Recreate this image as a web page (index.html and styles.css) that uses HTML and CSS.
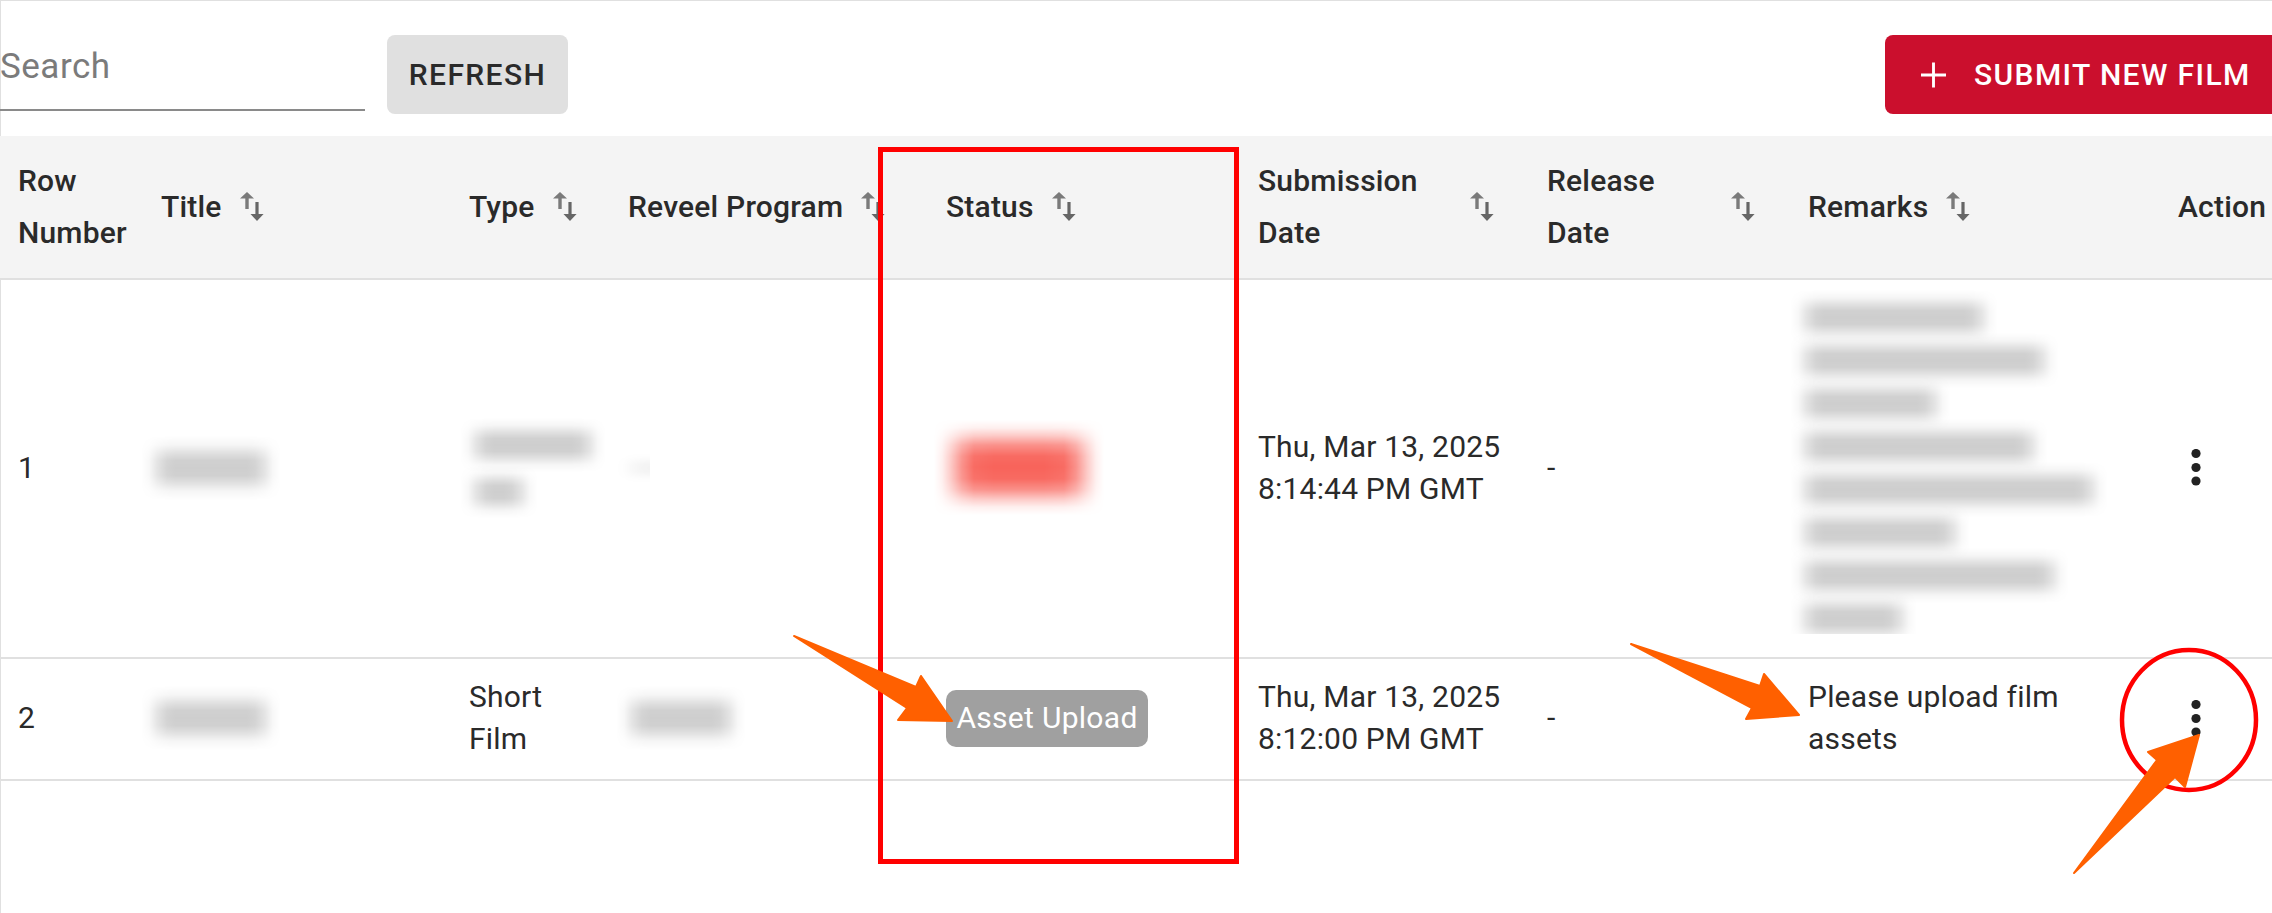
FILE: index.html
```html
<!DOCTYPE html>
<html>
<head>
    <meta charset="utf-8">
    <title>Film submissions</title>
    <link rel="stylesheet" href="styles.css">
</head>
<body>
    <div class="page">
        <div class="toolbar">
            <div class="search"><span class="search-text">Search</span></div>
            <button class="btn btn-refresh">REFRESH</button>
            <button class="btn btn-submit">
                <svg class="plus-icon" viewBox="0 0 26 26"><path d="M11.5 0h3v11.5H26v3H14.5V26h-3V14.5H0v-3h11.5z"/></svg>
                SUBMIT NEW FILM
            </button>
        </div>

        <table class="films">
            <colgroup>
                <col class="col-row">
                <col class="col-title">
                <col class="col-type">
                <col class="col-program">
                <col class="col-status">
                <col class="col-submitted">
                <col class="col-release">
                <col class="col-remarks">
                <col class="col-action">
            </colgroup>
            <thead>
                <tr>
                    <th>Row Number</th>
                    <th><div class="th-inner"><span>Title</span><svg class="sort-icon"><use href="#sort"/></svg></div></th>
                    <th><div class="th-inner"><span>Type</span><svg class="sort-icon"><use href="#sort"/></svg></div></th>
                    <th><div class="th-inner"><span>Reveel Program</span><svg class="sort-icon"><use href="#sort"/></svg></div></th>
                    <th><div class="th-inner"><span>Status</span><svg class="sort-icon"><use href="#sort"/></svg></div></th>
                    <th><div class="th-inner"><span class="th-grow">Submission<br>Date</span><svg class="sort-icon"><use href="#sort"/></svg></div></th>
                    <th><div class="th-inner"><span class="th-grow">Release<br>Date</span><svg class="sort-icon"><use href="#sort"/></svg></div></th>
                    <th><div class="th-inner"><span>Remarks</span><svg class="sort-icon"><use href="#sort"/></svg></div></th>
                    <th>Action</th>
                </tr>
            </thead>
            <tbody>
                <tr class="row-tall">
                    <td>1</td>
                    <td><div class="blur blur-title"></div></td>
                    <td>
                        <div class="blur blur-type-a"></div>
                        <div class="blur blur-type-b"></div>
                    </td>
                    <td><div class="blur blur-dash"></div></td>
                    <td><div class="blur blur-status"></div></td>
                    <td>Thu, Mar 13, 2025<br>8:14:44 PM GMT</td>
                    <td>-</td>
                    <td class="remarks-cell">
                        <div class="remarks-blur">
                            <div class="blur remark-line"></div>
                            <div class="blur remark-line"></div>
                            <div class="blur remark-line"></div>
                            <div class="blur remark-line"></div>
                            <div class="blur remark-line"></div>
                            <div class="blur remark-line"></div>
                            <div class="blur remark-line"></div>
                            <div class="blur remark-line"></div>
                        </div>
                    </td>
                    <td><svg class="kebab" viewBox="0 0 10 37"><circle cx="5" cy="4.5" r="4.6"/><circle cx="5" cy="18.5" r="4.6"/><circle cx="5" cy="32" r="4.6"/></svg></td>
                </tr>
                <tr class="row-short">
                    <td>2</td>
                    <td><div class="blur blur-title"></div></td>
                    <td>Short<br>Film</td>
                    <td><div class="blur blur-program"></div></td>
                    <td><span class="badge">Asset Upload</span></td>
                    <td>Thu, Mar 13, 2025<br>8:12:00 PM GMT</td>
                    <td>-</td>
                    <td>Please upload film<br>assets</td>
                    <td><svg class="kebab" viewBox="0 0 10 37"><circle cx="5" cy="4.5" r="4.6"/><circle cx="5" cy="18.5" r="4.6"/><circle cx="5" cy="32" r="4.6"/></svg></td>
                </tr>
            </tbody>
        </table>
    </div>

    <!-- sort icon, reused in the header cells -->
    <svg class="defs">
        <symbol id="sort" viewBox="0 0 41 30">
            <path d="M7 0l7 6.5H8.7V17H5.3V6.5H0z" fill="#7a7a7a"/>
            <path d="M15.4 10h3.2v12h5L17 29l-6.5-7h4.9z" fill="#666"/>
        </symbol>
    </svg>

    <!-- hand-drawn markup on top of the screenshot -->
    <svg class="annotations" viewBox="0 0 2272 913">
        <rect class="mark-line" x="880.5" y="149.5" width="356" height="712" stroke-width="5"/>
        <ellipse class="mark-line" cx="2189" cy="720" rx="67" ry="70" stroke-width="4.5"/>
        <polygon class="mark-arrow" points="794,636 916,687 921,676 952,721 898,720 907,708"/>
        <polygon class="mark-arrow" points="1631,644 1760,686 1764,674 1799,715 1746,719 1752,708"/>
        <polygon class="mark-arrow" points="2074,873 2157,760 2148,752 2199,735 2185,787 2175,777"/>
    </svg>
</body>
</html>
```

FILE: styles.css
```css
:root {
    --text: #2a2a2a;
    --border: #e0e0e0;
    --head-bg: #f4f4f4;
    --red: #cb0f2d;
    --mark-red: #ff0000;
    --mark-orange: #ff6000;
    --fade-x: linear-gradient(to right, transparent, rgba(0,0,0,.15) 8px, rgba(0,0,0,.55) 16px, rgba(0,0,0,.9) 26px, #000 34px, #000 calc(100% - 34px), rgba(0,0,0,.9) calc(100% - 26px), rgba(0,0,0,.55) calc(100% - 16px), rgba(0,0,0,.15) calc(100% - 8px), transparent);
    --fade-y: linear-gradient(to bottom, transparent, rgba(0,0,0,.2) 14%, rgba(0,0,0,.6) 26%, rgba(0,0,0,.95) 38%, #000 50%, rgba(0,0,0,.95) 62%, rgba(0,0,0,.6) 74%, rgba(0,0,0,.2) 86%, transparent);
    --soft-x: linear-gradient(to right, transparent, rgba(0,0,0,.1) 8px, rgba(0,0,0,.35) 17px, rgba(0,0,0,.7) 28px, rgba(0,0,0,.95) 40px, #000 60px, #000 calc(100% - 60px), rgba(0,0,0,.95) calc(100% - 40px), rgba(0,0,0,.7) calc(100% - 28px), rgba(0,0,0,.35) calc(100% - 17px), rgba(0,0,0,.1) calc(100% - 8px), transparent);
    --soft-y: linear-gradient(to bottom, transparent, rgba(0,0,0,.1) 8px, rgba(0,0,0,.35) 16px, rgba(0,0,0,.7) 25px, rgba(0,0,0,.95) 36px, #000 47px, rgba(0,0,0,.95) calc(100% - 36px), rgba(0,0,0,.7) calc(100% - 25px), rgba(0,0,0,.35) calc(100% - 16px), rgba(0,0,0,.1) calc(100% - 8px), transparent);
}

body {
    margin: 0;
    background: #fff;
    font-family: Roboto, "Liberation Sans", sans-serif;
    color: var(--text);
    overflow: hidden;
}

.page {
    height: 913px;
    box-sizing: border-box;
    border-top: 1px solid var(--border);
    border-left: 1px solid var(--border);
}

.toolbar {
    display: flex;
    align-items: flex-start;
    height: 135px;
    padding-top: 34px;
    box-sizing: border-box;
}

.search {
    width: 365px;
    height: 76px;
    box-sizing: border-box;
    border-bottom: 2px solid #8a8a8a;
    margin-right: 22px;
    margin-left: -1px;
}

.search-text {
    display: block;
    margin-top: 12px;
    font-size: 35px;
    line-height: 40px;
    letter-spacing: 0.5px;
    color: #7b7b7b;
}

.btn {
    display: flex;
    align-items: center;
    height: 79px;
    border: none;
    border-radius: 8px;
    font-family: inherit;
    font-size: 30px;
    font-weight: 500;
    letter-spacing: 1.4px;
    padding: 0;
}

.btn-refresh {
    width: 181px;
    justify-content: center;
    background: var(--border);
    color: var(--text);
}

.btn-submit {
    margin-left: auto;
    width: 387px;
    padding-left: 36px;
    box-sizing: border-box;
    border-radius: 8px 0 0 8px;
    background: var(--red);
    color: #fff;
}

.plus-icon {
    width: 25px;
    height: 26px;
    margin-right: 28px;
    fill: #fff;
}

.films {
    width: 2273px;
    margin-left: -1px;
    table-layout: fixed;
    border-collapse: separate;
    border-spacing: 0;
    font-size: 30px;
    letter-spacing: 0.2px;
    line-height: 42px;
}

.col-row { width: 143px; }
.col-title { width: 308px; }
.col-type { width: 159px; }
.col-program { width: 318px; }
.col-status { width: 312px; }
.col-submitted { width: 289px; }
.col-release { width: 261px; }
.col-remarks { width: 370px; }
.col-action { width: 113px; }

.films th {
    height: 144px;
    box-sizing: border-box;
    background: var(--head-bg);
    border-bottom: 2px solid var(--border);
    padding: 0 18px;
    text-align: left;
    font-weight: 500;
    line-height: 52px;
}

.th-inner {
    display: flex;
    align-items: center;
    white-space: nowrap;
}

.th-grow {
    flex: 1;
}

.sort-icon {
    flex: none;
    width: 41px;
    height: 30px;
    margin-left: 18px;
}

.defs {
    display: none;
}

.films td {
    box-sizing: border-box;
    border-bottom: 2px solid var(--border);
    padding: 0 18px 2px;
    vertical-align: middle;
}

.row-tall td { height: 379px; }
.row-short td { height: 122px; }

/* redacted text: soft smears, faded out on both axes */
.blur {
    background: #cecece;
    -webkit-mask-image: var(--fade-x), var(--fade-y);
    -webkit-mask-composite: source-in;
    mask-image: var(--fade-x), var(--fade-y);
    mask-composite: intersect;
}

.blur-title {
    width: 140px;
    height: 64px;
    margin-left: -20px;
}

.blur-type-a {
    width: 146px;
    height: 54px;
    margin: 0 0 -6px -9px;
}

.blur-type-b {
    width: 78px;
    height: 52px;
    margin-left: -9px;
}

.blur-dash {
    width: 34px;
    height: 30px;
    margin-left: -12px;
    background: #f3f3f3;
}

.blur-program {
    width: 130px;
    height: 64px;
    margin-left: -12px;
}

.blur-status {
    width: 170px;
    height: 95px;
    margin-left: -12px;
    background: #f8635a;
    -webkit-mask-image: var(--soft-x), var(--soft-y);
    mask-image: var(--soft-x), var(--soft-y);
}

.films td.remarks-cell {
    padding: 0;
}

.remarks-blur {
    height: 344px;
    margin-top: -13px;
    box-sizing: border-box;
    overflow: hidden;
}

.remark-line {
    height: 55px;
    margin-bottom: -12px;
}

.remark-line:nth-child(1) { width: 208px; }
.remark-line:nth-child(2) { width: 269px; }
.remark-line:nth-child(3) { width: 161px; }
.remark-line:nth-child(4) { width: 258px; }
.remark-line:nth-child(5) { width: 318px; }
.remark-line:nth-child(6) { width: 180px; }
.remark-line:nth-child(7) { width: 279px; }
.remark-line:nth-child(8) { width: 127px; }

.badge {
    display: inline-flex;
    align-items: center;
    justify-content: center;
    width: 202px;
    height: 57px;
    border-radius: 10px;
    background: #a0a0a0;
    color: #fff;
    white-space: nowrap;
    letter-spacing: 0.3px;
}

.kebab {
    display: block;
    width: 10px;
    height: 37px;
    margin-left: 13px;
    fill: #222;
}

.annotations {
    position: absolute;
    top: 0;
    left: 0;
    width: 2272px;
    height: 913px;
    pointer-events: none;
}

.mark-line {
    fill: none;
    stroke: var(--mark-red);
}

.mark-arrow {
    fill: var(--mark-orange);
    stroke: var(--mark-orange);
    stroke-width: 2;
    stroke-linejoin: round;
}
```
